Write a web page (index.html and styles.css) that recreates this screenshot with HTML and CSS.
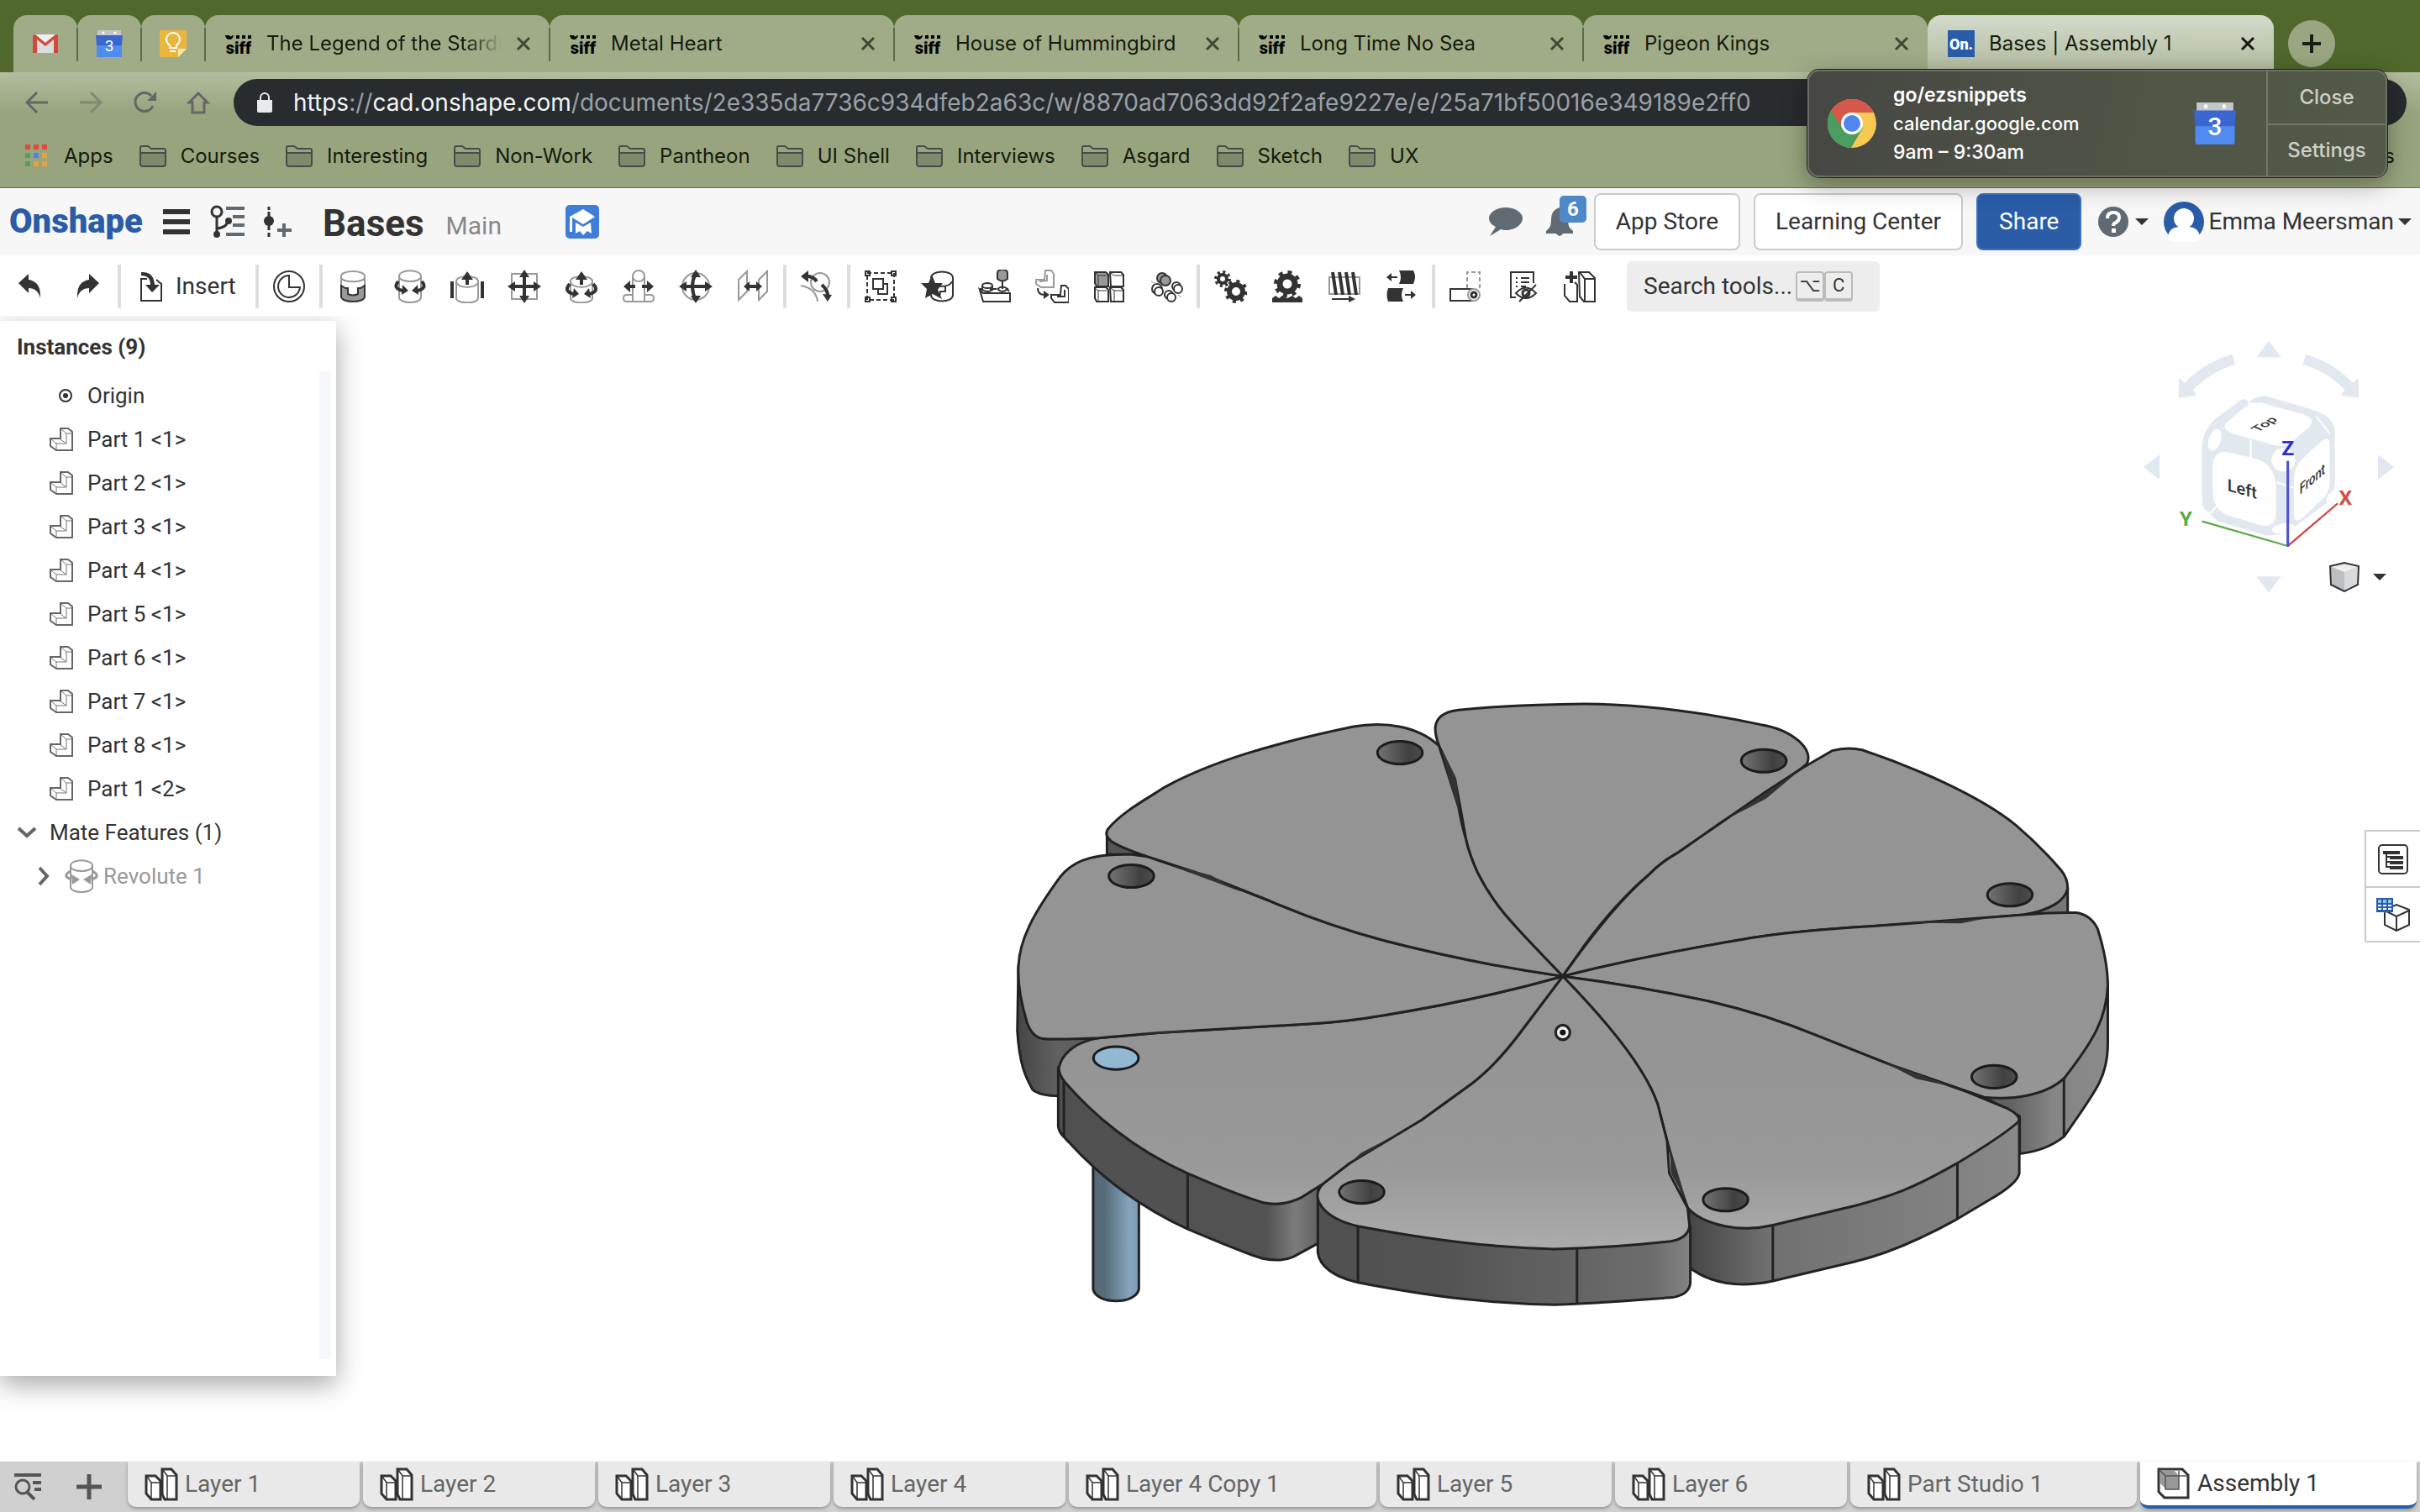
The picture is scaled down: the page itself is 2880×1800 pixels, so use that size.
FILE: index.html
```html
<!DOCTYPE html>
<html lang="en">
<head>
<meta charset="utf-8">
<title>Bases | Assembly 1</title>
<link rel="stylesheet" href="styles.css">
</head>
<body>
<svg class="defs" aria-hidden="true">
  <defs>
    <symbol id="siff" viewBox="0 0 32 32"><g fill="#000"><path d="M0 6h5q1 3 4 0h1q-1 5-5 5-4 0-5-5zM13 6h4v4h-4zM20 6h4v4h-4zM27 6h4v4h-4z"/></g><text x="16" y="28" text-anchor="middle" font-family="Roboto, sans-serif" font-weight="900" font-size="20">siff</text></symbol>
    <symbol id="close" viewBox="0 0 18 18"><path d="M2 2l14 14M16 2L2 16" fill="none" stroke="currentColor" stroke-width="3"/></symbol>
    <symbol id="folder" viewBox="0 0 32 26"><path d="M1 8h30v14q0 3-3 3H4q-3 0-3-3z" fill="#7f8a6d"/><path d="M1 8V3q0-2 2-2h7l4 3h15q2 0 2 2v16q0 3-3 3H4q-3 0-3-3zM1 9h30" fill="none" stroke="#4a4a4a" stroke-width="2"/></symbol>
    <symbol id="cal" viewBox="0 0 32 32"><path d="M2 0h28v8H2z" fill="#c4c7c9"/><circle cx="9" cy="3" r="1.500" fill="#fff"/><circle cx="23" cy="3" r="1.500" fill="#fff"/><path d="M0 6h32l-1 12v12q0 2-2 2H3q-2 0-2-2V18z" fill="#3a66d0"/><path d="M1 18h30v12q0 2-2 2H3q-2 0-2-2z" fill="#4f8bf0"/><text x="16" y="25" text-anchor="middle" font-family="Roboto, sans-serif" font-size="19" fill="#fff">3</text></symbol>
    <symbol id="caret" viewBox="0 0 16 8"><path d="M0 0h16L8 8z" fill="#333"/></symbol>
    <symbol id="part" viewBox="0 0 28 28"><path d="M13 1h9l5 4v22H8l-7-5v-9h12z" fill="#fff" stroke="#666" stroke-width="2"/><path d="M14 2l6 5h6M20 7v12H8v7M2 14l6 5M20 19l-7-5" fill="none" stroke="#777"/></symbol>
    <symbol id="studio" viewBox="0 0 40 40"><g fill="#fff" stroke="#333" stroke-width="3"><path d="M2 10h11l6 6v22H8l-6-7z"/><path d="M21 2h11l6 7v29H24l-3-6z"/></g><path d="M3 11l5 7h10M8 18v19M22 3l5 7h10M27 10v27" fill="none" stroke="#333" stroke-width="1.500"/></symbol>
    <linearGradient id="hole"><stop offset="0" stop-color="#747474"/><stop offset=".7" stop-color="#404040"/><stop offset="1" stop-color="#4c4c4c"/></linearGradient>
    <linearGradient id="pin"><stop offset="0" stop-color="#56697a"/><stop offset=".25" stop-color="#566b7a"/><stop offset=".8" stop-color="#86a5bc"/><stop offset="1" stop-color="#789cb4"/></linearGradient>
    <linearGradient id="face" gradientUnits="userSpaceOnUse" x1="0" y1="900" x2="0" y2="1380"><stop offset="0" stop-color="#949494"/><stop offset=".6" stop-color="#9a9a9a"/><stop offset="1" stop-color="#acacac"/></linearGradient>
    <linearGradient id="sideW"><stop offset="0" stop-color="#454545"/><stop offset=".5" stop-color="#616161"/><stop offset="1" stop-color="#555"/></linearGradient>
    <linearGradient id="sideSW"><stop offset="0" stop-color="#505050"/><stop offset=".8" stop-color="#525252"/><stop offset=".91" stop-color="#7b7b7b"/><stop offset="1" stop-color="#626262"/></linearGradient>
    <linearGradient id="sideS"><stop offset="0" stop-color="#505050"/><stop offset=".3" stop-color="#525252"/><stop offset=".9" stop-color="#6d6d6d"/><stop offset="1" stop-color="#838383"/></linearGradient>
    <linearGradient id="sideSE"><stop offset="0" stop-color="#454545"/><stop offset=".24" stop-color="#707070"/><stop offset="1" stop-color="#888"/></linearGradient>
    <linearGradient id="sideE"><stop offset=".2" stop-color="#606060"/><stop offset=".55" stop-color="#858585"/><stop offset="1" stop-color="#8a8a8a"/></linearGradient>
  </defs>
</svg>

<div class="browser">
  <div class="tabstrip">
    <a class="tab pinned" href="#gmail" aria-label="Gmail"><svg width="30" height="22" viewBox="0 0 30 22"><path d="M2 0h26v22H2z" fill="#eee"/><path d="M5 22V5l10 8 10-8v17z" fill="#dcdcdc"/><path d="M0 2q0-2 3-2l12 10L27 0q3 0 3 2v20h-5V6L15 14 5 6v16H0z" fill="#d04b3e"/></svg></a>
    <a class="tab pinned" href="#calendar" aria-label="Calendar"><svg width="32" height="32"><use href="#cal"/></svg></a>
    <a class="tab pinned" href="#keep" aria-label="Keep"><svg width="32" height="32" viewBox="0 0 32 32"><path d="M2 0h28q2 0 2 2v20L22 32H2q-2 0-2-2V2q0-2 2-2z" fill="#eab63e"/><path d="M32 22L22 32V22z" fill="#fbe9ae"/><path d="M12 21v-3q-4-3-4-7a8 8 0 0 1 16 0q0 4-4 7v3zM12 25h7" fill="none" stroke="#fff" stroke-width="2"/></svg></a>
    <div class="tab"><svg width="32" height="32"><use href="#siff"/></svg><a class="fade" href="#t1">The Legend of the Stardust</a><button aria-label="Close tab"><svg width="18" height="18"><use href="#close"/></svg></button></div>
    <div class="tab"><svg width="32" height="32"><use href="#siff"/></svg><a href="#t2">Metal Heart</a><button aria-label="Close tab"><svg width="18" height="18"><use href="#close"/></svg></button></div>
    <div class="tab"><svg width="32" height="32"><use href="#siff"/></svg><a href="#t3">House of Hummingbird</a><button aria-label="Close tab"><svg width="18" height="18"><use href="#close"/></svg></button></div>
    <div class="tab"><svg width="32" height="32"><use href="#siff"/></svg><a href="#t4">Long Time No Sea</a><button aria-label="Close tab"><svg width="18" height="18"><use href="#close"/></svg></button></div>
    <div class="tab"><svg width="32" height="32"><use href="#siff"/></svg><a href="#t5">Pigeon Kings</a><button aria-label="Close tab"><svg width="18" height="18"><use href="#close"/></svg></button></div>
    <div class="tab active"><svg width="32" height="32" viewBox="0 0 32 32"><path d="M0 0h32v32H0z" fill="#2a5ca8"/><text x="16" y="23" text-anchor="middle" font-family="Roboto, sans-serif" font-weight="900" font-size="18" fill="#fff">On.</text></svg><a href="#t6">Bases | Assembly 1</a><button aria-label="Close tab"><svg width="18" height="18"><use href="#close"/></svg></button></div>
    <button class="newtab" aria-label="New tab"><svg width="24" height="24" viewBox="0 0 24 24"><path d="M12 1v22M1 12h22" stroke="#1a1f10" stroke-width="4"/></svg></button>
  </div>

  <div class="navbar">
    <button aria-label="Back"><svg width="28" height="28" viewBox="0 0 28 28"><path d="M27 14H3M14 2L2 14l12 12" fill="none" stroke="#666" stroke-width="3"/></svg></button>
    <button aria-label="Forward"><svg width="28" height="28" viewBox="0 0 28 28"><path d="M1 14h24M14 2l12 12-12 12" fill="none" stroke="#7f8a70" stroke-width="3"/></svg></button>
    <button aria-label="Reload"><svg width="28" height="28" viewBox="0 0 28 28"><path d="M24 18a11 11 0 1 1-2-12" fill="none" stroke="#666" stroke-width="3"/><path d="M28 1v11H17z" fill="#666"/></svg></button>
    <button aria-label="Home"><svg width="28" height="28" viewBox="0 0 28 28"><path d="M14 3L3 14h4v12h14V14h4z" fill="none" stroke="#666" stroke-width="3"/></svg></button>
    <div class="omnibox"><svg width="18" height="24" viewBox="0 0 18 24"><path d="M0 9h18v13q0 2-2 2H2q-2 0-2-2z" fill="#e8eaed"/><path d="M4 10V6a5 5 0 0 1 10 0v4" fill="none" stroke="#e8eaed" stroke-width="2"/></svg><span><b>https</b>://<b>cad.onshape.com</b>/documents/2e335da7736c934dfeb2a63c/w/8870ad7063dd92f2afe9227e/e/25a71bf50016e349189e2ff0</span></div>
  </div>

  <nav class="bookmarks">
    <a href="#apps" class="apps"><svg width="26" height="28" viewBox="0 0 26 28"><path d="M0 0h6v6H0zM10 0h6v6h-6zM20 0h6v6h-6z" fill="#df4a3c"/><path d="M0 10h6v6H0zM0 20h6v6H0z" fill="#57a05c"/><path d="M10 10h6v6h-6z" fill="#4a86e8"/><path d="M20 10h6v6h-6zM10 20h6v6h-6zM20 20h6v6h-6z" fill="#e9a13b"/></svg>Apps</a>
    <a href="#b1"><svg width="32" height="26"><use href="#folder"/></svg>Courses</a>
    <a href="#b2"><svg width="32" height="26"><use href="#folder"/></svg>Interesting</a>
    <a href="#b3"><svg width="32" height="26"><use href="#folder"/></svg>Non-Work</a>
    <a href="#b4"><svg width="32" height="26"><use href="#folder"/></svg>Pantheon</a>
    <a href="#b5"><svg width="32" height="26"><use href="#folder"/></svg>UI Shell</a>
    <a href="#b6"><svg width="32" height="26"><use href="#folder"/></svg>Interviews</a>
    <a href="#b7"><svg width="32" height="26"><use href="#folder"/></svg>Asgard</a>
    <a href="#b8"><svg width="32" height="26"><use href="#folder"/></svg>Sketch</a>
    <a href="#b9"><svg width="32" height="26"><use href="#folder"/></svg>UX</a>
    <a href="#other" class="other">Other Bookmarks</a>
  </nav>
</div>

<aside class="toast">
  <div class="toast-main">
    <svg width="58" height="58" viewBox="0 0 58 58"><circle cx="29" cy="29" r="29" fill="#f6c953"/><path d="M29 29L4 14A29 29 0 0 0 28 58L42 34z" fill="#4a9d5f"/><path d="M4 14A29 29 0 0 1 55 16H29A13 13 0 0 0 16 32z" fill="#d5584a"/><circle cx="29" cy="29" r="13" fill="#fff"/><circle cx="29" cy="29" r="10" fill="#5186ec"/></svg>
    <p><strong>go/ezsnippets</strong><br><span>calendar.google.com</span><br>9am – 9:30am</p>
    <svg width="50" height="50"><use href="#cal"/></svg>
  </div>
  <div class="toast-actions"><button>Close</button><button>Settings</button></div>
</aside>

<header class="appbar">
  <a class="logo" href="#home">Onshape</a>
  <button aria-label="Menu"><svg width="32" height="32" viewBox="0 0 32 32"><path d="M0 4h32M0 16h32M0 28h32" stroke="#333" stroke-width="6"/></svg></button>
  <button class="versions" aria-label="Versions"><svg width="42" height="40" viewBox="0 0 42 40"><g fill="none" stroke="#333" stroke-width="3"><circle cx="9" cy="8" r="6"/><path d="M9 14v22M9 28q12-1 13-9"/></g><circle cx="9" cy="35" r="4" fill="#333"/><circle cx="23" cy="19" r="4" fill="#333"/><path d="M20 4h22M28 14h14M28 24h14M20 35h22" stroke="#5f6a72" stroke-width="4"/></svg></button>
  <button class="create" aria-label="Create version"><svg width="34" height="36" viewBox="0 0 34 36"><path d="M7 0v4M7 6v6M7 22v6M7 31v5" stroke="#333" stroke-width="3"/><circle cx="7" cy="17" r="6" fill="#333"/><path d="M25 20v16M17 28h17" stroke="#5f6a72" stroke-width="4"/></svg></button>
  <h1>Bases</h1>
  <span class="branch">Main</span>
  <svg class="edu" width="40" height="40" viewBox="0 0 40 40"><rect width="40" height="40" rx="5" fill="#3f7dd6"/><path d="M21 5l14 9-14 9-13-8v17H5V14z" fill="#fff"/><path d="M12 21l9 5 9-5 1 13-5-3-5 5-4-5-5 3z" fill="#fff"/></svg>
  <div class="account">
    <button aria-label="Comments"><svg width="40" height="34" viewBox="0 0 40 34"><path d="M20 0c11 0 20 6 20 13s-9 14-20 14q-3 0-6-1L1 34l7-11Q0 19 0 13C0 6 9 0 20 0z" fill="#5f6a72"/></svg></button>
    <button class="bell" aria-label="Notifications"><svg width="32" height="36" viewBox="0 0 32 36"><path d="M16 1q10 3 10 14 0 9 3 11l3 3v3H20q-4 6-8 0H0v-3l3-3q3-2 3-11Q6 4 16 1z" fill="#5f6a72"/></svg><span class="badge">6</span></button>
    <button class="btn">App Store</button>
    <button class="btn">Learning Center</button>
    <button class="btn primary">Share</button>
    <button class="help" aria-label="Help"><svg width="36" height="36" viewBox="0 0 36 36"><circle cx="18" cy="18" r="18" fill="#5f6a72"/><path d="M11 14q0-7 7-7t7 6q0 4-4 6-3 1-3 4" fill="none" stroke="#fff" stroke-width="4"/><path d="M16 26h5v5h-5z" fill="#fff"/></svg><svg width="16" height="8"><use href="#caret"/></svg></button>
    <button class="user"><svg width="48" height="48" viewBox="0 0 48 48"><circle cx="24" cy="24" r="24" fill="#2a5ca8"/><circle cx="24" cy="20" r="12" fill="#fff"/><path d="M5 44q0-13 13-14h12q13 1 13 14l-5 4H10z" fill="#fff"/></svg>Emma Meersman<svg width="16" height="8"><use href="#caret"/></svg></button>
  </div>
</header>

<div class="toolbar">
  <button class="tool" aria-label="Undo"><svg viewBox="0 0 40 40"><path d="M6 16L18 5v7q15 2 14 22-3-12-14-12v6z" fill="#333"/></svg></button>
  <button class="tool" aria-label="Redo"><svg viewBox="0 0 40 40"><path d="M34 16L22 5v7Q7 14 8 34q3-12 14-12v6z" fill="#333"/></svg></button>
  <i class="sep"></i>
  <button class="insert"><svg width="26" height="36" viewBox="0 0 26 36"><path d="M8 9H1v26h24V15l-6-5" fill="#fff" stroke="#333" stroke-width="2"/><path d="M1 1q15-1 16 15h6l-9 9-8-9h6Q12 5 1 5z" fill="#333"/></svg>Insert</button>
  <i class="sep"></i>
  <button class="tool"><svg viewBox="0 0 40 40"><g fill="none" stroke="#333" stroke-width="2"><circle cx="20" cy="20" r="18"/><path d="M20 7a13 13 0 1 0 13 14H20z"/></g></svg></button>
  <i class="sep"></i>
  <button class="tool"><svg viewBox="0 0 40 40"><path d="M6 20V8c0-8 28-8 28 0v12M6 9c0 7 28 7 28 0" fill="none" stroke="#999" stroke-width="2"/><path d="M6 19v13c0 8 28 8 28 0V19l-5 3h-3v7q-6 3-12 0v-7h-3z" fill="#999" stroke="#333" stroke-width="2"/></svg></button>
  <button class="tool"><svg viewBox="0 0 40 40"><path d="M7 8v25c0 8 26 8 26 0V8c0-9-26-9-26 0c0 8 26 8 26 0" fill="none" stroke="#999" stroke-width="2"/><path d="M6 14q-7 8 5 11M34 14q7 8-5 11" fill="none" stroke="#333" stroke-width="4"/><path d="M11 18l7 7-8 5zM29 18l-7 7 8 5z" fill="#333"/></svg></button>
  <button class="tool"><svg viewBox="0 0 40 40"><path d="M7 14v20c0 7 26 7 26 0V14c0-8-26-8-26 0c0 9 26 9 26 0" fill="none" stroke="#999" stroke-width="2"/><path d="M0 14h4v20H0zM36 14h4v20h-4zM20 2l7 10h-5v6h-4v-6h-5z" fill="#333"/></svg></button>
  <button class="tool"><svg viewBox="0 0 40 40"><path d="M5 5h30v30H5z" fill="none" stroke="#999" stroke-width="2"/><path d="M20 3v34M3 20h34" stroke="#333" stroke-width="4"/><path d="M20 0l6 9H14zM20 40l6-9H14zM0 20l9-6v12zM40 20l-9-6v12z" fill="#333"/></svg></button>
  <button class="tool"><svg viewBox="0 0 40 40"><path d="M7 14v20c0 7 26 7 26 0V14c0-8-26-8-26 0c0 9 26 9 26 0" fill="none" stroke="#999" stroke-width="2"/><path d="M20 2l7 10h-5v6h-4v-6h-5zM11 22l6 7-8 5zM29 22l-6 7 8 5z" fill="#333"/><path d="M6 17q-8 9 5 12M34 17q8 9-5 12" fill="none" stroke="#333" stroke-width="4"/></svg></button>
  <button class="tool"><svg viewBox="0 0 40 40"><path d="M13 38V8a7 7 0 0 1 14 0v30M13 8a7 6 0 0 0 14 0M13 30H6q-4 0-4 4t4 4h28q4 0 4-4t-4-4h-7" fill="none" stroke="#999" stroke-width="2"/><path d="M2 20l8-7v5h6v4h-6v5zM38 20l-8-7v5h-6v4h6v5z" fill="#333"/></svg></button>
  <button class="tool"><svg viewBox="0 0 40 40"><circle cx="20" cy="20" r="16" fill="none" stroke="#999" stroke-width="2"/><path d="M20 4q-8 16 0 32M3 20h34" fill="none" stroke="#333" stroke-width="4"/><path d="M20 0l6 9H14zM20 40l6-9H14zM0 20l9-6v12zM40 20l-9-6v12z" fill="#333"/></svg></button>
  <button class="tool"><svg viewBox="0 0 40 40"><path d="M3 12l10-10v24L3 36zM27 12L37 2v24L27 36z" fill="none" stroke="#999" stroke-width="2"/><path d="M9 20l7-6v4h8v-4l7 6-7 6v-4h-8v4z" fill="#333"/></svg></button>
  <i class="sep"></i>
  <button class="tool"><svg viewBox="0 0 40 40"><path d="M1 19q18 3 20 19" fill="none" stroke="#999" stroke-width="2"/><circle cx="24" cy="15" r="11" fill="none" stroke="#999" stroke-width="2"/><path d="M6 8q9-1 14 6M26 18q8 7 7 15" fill="none" stroke="#333" stroke-width="4"/><path d="M1 8l9-7v14zM33 38l-6-9 11 1z" fill="#333"/></svg></button>
  <i class="sep"></i>
  <button class="tool"><svg viewBox="0 0 40 40"><path d="M4 4h32v32H4z" fill="none" stroke="#333" stroke-width="2" stroke-dasharray="5 3"/><path d="M2 2h5v5H2zM33 2h5v5h-5zM2 33h5v5H2zM33 33h5v5h-5zM11 11h12v12H11zM17 24v5h11V17h-5" fill="none" stroke="#333" stroke-width="2"/></svg></button>
  <button class="tool"><svg viewBox="0 0 40 40"><path d="M12 10c0-10 26-10 26 0v20c0 10-26 10-26 0M23 20q12 0 14-6M22 33l1-7h6v-6" fill="none" stroke="#333" stroke-width="2"/><path d="M13 6l4 10h9l-6 8 5 11-11-6-9 5 2-11-7-7h9z" fill="#333"/></svg></button>
  <button class="tool"><svg viewBox="0 0 40 40"><path d="M2 24l4 14h32V28H6zM2 23h4M14 23h8M34 22l3 4" fill="none" stroke="#333" stroke-width="2"/><ellipse cx="11" cy="19" rx="6" ry="3" fill="none" stroke="#333" stroke-width="2"/><path d="M5 19v5q6 4 12 0v-5M23 23q6-5 12 0-6 6-12 0M29 14v9" fill="none" stroke="#333" stroke-width="2"/><path d="M23 4q0-4 6-4t6 4v7q-6 5-12 0z" fill="#999" stroke="#333" stroke-width="2"/></svg></button>
  <button class="tool"><svg viewBox="0 0 40 40"><path d="M12 1h7l3 4v16H7l-6-4v-5h10zM14 6v7l-9 1" fill="none" stroke="#999" stroke-width="2"/><path d="M31 19h5l4 4v16H23l-4-5v-4h11zM35 24v8h-9M3 22q0 8 8 8" fill="none" stroke="#333" stroke-width="2"/><path d="M17 30l-7-5v10z" fill="#333"/></svg></button>
  <button class="tool"><svg viewBox="0 0 40 40"><g fill="#fff" stroke="#333" stroke-width="2"><path d="M3 3h13l3 3v14H5l-2-4z" fill="#999"/><path d="M21 3h13l3 3v14H22zM3 21h13l3 3v14H5l-2-4zM21 21h13l3 3v14H22z"/></g><path d="M3 3l4 4h10M7 7v12M22 4l4 3h10M3 22l4 3h10M7 25v12M22 22l4 3h10M26 25v12" fill="none" stroke="#333"/></svg></button>
  <button class="tool"><svg viewBox="0 0 40 40"><g fill="#fff" stroke="#333" stroke-width="2"><g fill="#999"><circle cx="15" cy="10" r="6"/><circle cx="19" cy="13" r="6"/></g><circle cx="32" cy="20" r="5"/><circle cx="34" cy="23" r="5"/><circle cx="9" cy="23" r="6"/><circle cx="11" cy="26" r="5"/><circle cx="23" cy="30" r="5"/><circle cx="26" cy="33" r="5"/></g><path d="M2 14l6 3M34 30l4 3" stroke="#999"/></svg></button>
  <i class="sep"></i>
  <button class="tool"><svg viewBox="0 0 40 40"><g fill="none" stroke="#333"><circle cx="11" cy="11" r="5" stroke-width="4"/><circle cx="11" cy="11" r="8" stroke-width="4" stroke-dasharray="3 3.280"/><circle cx="27" cy="26" r="8" stroke-width="6"/><circle cx="27" cy="26" r="12" stroke-width="4" stroke-dasharray="4 5.420"/></g></svg></button>
  <button class="tool"><svg viewBox="0 0 40 40"><g fill="none" stroke="#333"><circle cx="20" cy="17" r="9" stroke-width="7"/><circle cx="20" cy="17" r="14" stroke-width="4" stroke-dasharray="5 6"/></g><path d="M2 39v-5l4-3 4 3 4-3 6 3 6-3 4 3 4-3 4 3v5z" fill="#333"/></svg></button>
  <button class="tool"><svg viewBox="0 0 40 40"><path d="M2 9h36v20H2z" fill="none" stroke="#999" stroke-width="2"/><path d="M6 3l4 27M14 3l4 27M22 3l4 27M30 3l4 27" stroke="#333" stroke-width="4"/><path d="M5 35h22" stroke="#333" stroke-width="2"/><path d="M33 35l-8-4v8z" fill="#333"/></svg></button>
  <button class="tool"><svg viewBox="0 0 40 40"><path d="M17 1h17q4 7 0 16H17q4-8 0-16zM4 22h18q-4 8 0 16H4q-3-8 0-16zM2 9l6-5v4h7v2H8v4zM37 30l-6-5v4h-7v2h7v4z" fill="#333"/></svg></button>
  <i class="sep"></i>
  <button class="tool"><svg viewBox="0 0 40 40"><path d="M22 22V3h15v22" fill="none" stroke="#999" stroke-width="2" stroke-dasharray="5 3"/><path d="M29 23H2v14h27" fill="none" stroke="#333" stroke-width="2"/><circle cx="30" cy="30" r="7" fill="#fff" stroke="#999" stroke-width="2"/><circle cx="30" cy="30" r="3" fill="none" stroke="#333" stroke-width="3"/></svg></button>
  <button class="tool"><svg viewBox="0 0 40 40"><path d="M12 33H6V3h27v13M12 10h2M18 10h10M12 15h2M18 15h10M12 20h2M18 20h6" fill="none" stroke="#333" stroke-width="2"/><path d="M12 28q12-13 24 0-12 12-24 0zM36 18L16 38" fill="none" stroke="#333" stroke-width="2"/><circle cx="24" cy="28" r="4" fill="none" stroke="#333" stroke-width="3"/></svg></button>
  <button class="tool"><svg viewBox="0 0 40 40"><path d="M2 17v14l6 7h9V18l-3-3M19 3h12l7 7v28H25l-5-6zM20 3l6 8h11M26 11v26" fill="none" stroke="#333" stroke-width="2"/><path d="M10 2v14M3 9h14" stroke="#333" stroke-width="4"/></svg></button>
  <button class="search">Search tools... <kbd>⌥</kbd><kbd>C</kbd></button>
</div>

<main class="workspace">
  <section class="instances">
    <h2>Instances (9)</h2>
    <div class="tree">
      <ul>
        <li><svg class="origin" viewBox="0 0 16 16"><circle cx="8" cy="8" r="7" fill="none" stroke="#333" stroke-width="2"/><circle cx="8" cy="8" r="3" fill="#333"/></svg>Origin</li>
        <li><svg class="part"><use href="#part"/></svg>Part 1 &lt;1&gt;</li>
        <li><svg class="part"><use href="#part"/></svg>Part 2 &lt;1&gt;</li>
        <li><svg class="part"><use href="#part"/></svg>Part 3 &lt;1&gt;</li>
        <li><svg class="part"><use href="#part"/></svg>Part 4 &lt;1&gt;</li>
        <li><svg class="part"><use href="#part"/></svg>Part 5 &lt;1&gt;</li>
        <li><svg class="part"><use href="#part"/></svg>Part 6 &lt;1&gt;</li>
        <li><svg class="part"><use href="#part"/></svg>Part 7 &lt;1&gt;</li>
        <li><svg class="part"><use href="#part"/></svg>Part 8 &lt;1&gt;</li>
        <li><svg class="part"><use href="#part"/></svg>Part 1 &lt;2&gt;</li>
        <li class="group"><svg width="24" height="14" viewBox="0 0 24 14"><path d="M2 2l10 9L22 2" fill="none" stroke="#666" stroke-width="4"/></svg>Mate Features (1)</li>
        <li class="mate"><svg width="14" height="24" viewBox="0 0 14 24"><path d="M2 2l9 10-9 10" fill="none" stroke="#666" stroke-width="4"/></svg><svg width="40" height="40" viewBox="0 0 40 40"><path d="M7 8v25c0 8 26 8 26 0V8c0-9-26-9-26 0c0 8 26 8 26 0" fill="none" stroke="#999" stroke-width="2"/><path d="M7 14q-11 6 1 10M33 14q11 6-1 10" fill="none" stroke="#999" stroke-width="3"/><path d="M8 18l10 6-9 6zM32 18l-10 6 9 6z" fill="#999"/></svg>Revolute 1</li>
      </ul>
      <div class="track"></div>
    </div>
  </section>

  <svg class="model" viewBox="0 0 3024 1568" preserveAspectRatio="none" role="img" aria-label="Assembly of eight petals">
    <g class="edges">
      <path d="M226 1170V1475C235 1513 339 1513 348 1475V1200z" fill="url(#pin)"/>
      <path d="M263 350V407H370z" fill="#555"/>
      <path d="M2824 490V552H2706z" fill="#777"/>
      <path d="M27 680L24 840C30 930 50 960 65 985Q85 1000 135 1000V930L240 858 100 860 50 820z" fill="url(#sideW)"/>
      <path d="M2601 1003L2696 1050V1142Q2766 1135 2814 1100C2906 980 2931 950 2931 870V730L2816 955Q2740 1010 2601 1003z" fill="url(#sideE)"/>
      <path d="M133 930V1075Q135 1090 150 1102C220 1175 330 1265 478 1327C550 1355 640 1390 680 1400Q730 1408 760 1395L826 1362V1220L680 1262 478 1190 150 965z" fill="url(#sideSW)"/>
      <path d="M1814 1275V1420C1876 1465 1956 1470 2036 1455L2256 1407C2356 1385 2456 1340 2530 1302L2616 1255Q2691 1215 2695 1190V1055L2036 1318z" fill="url(#sideSE)"/>
      <path d="M825 1240V1385C830 1420 870 1445 932 1458C1150 1497 1300 1510 1456 1513C1600 1508 1700 1500 1770 1495Q1815 1488 1818 1460V1320L1456 1376 932 1320z" fill="url(#sideS)"/>
      <path d="M148 965V1102M478 1190V1327M932 1320V1458M1516 1374V1512M2038 1318V1455M2530 1165V1302M2814 957V1100"/>
    </g>
    <g class="edges" fill="url(#face)">
      <path d="M1478 706C1420 650 1370 605 1320 550Q1280 505 1250 450Q1228 405 1220 370Q1205 290 1190 220L1148 140Q1138 115 1138 95Q1142 58 1200 52C1300 43 1400 38 1536 37Q1750 38 2006 88C2090 100 2150 150 2128 185L2090 213Q2060 240 2016 260L1906 325 1786 402Q1740 425 1706 458Q1620 525 1536 630z"/>
      <path d="M1478 706C1536 630 1620 525 1706 458Q1740 425 1786 402L1906 325 2016 255 2116 195 2196 152Q2236 142 2276 150C2406 190 2586 260 2686 335Q2750 385 2806 445Q2824 465 2824 490C2818 520 2776 545 2706 555L2556 567 2306 583Q2080 595 1956 616 1700 655 1478 706z"/>
      <path d="M1478 706Q1700 655 1956 616 2080 595 2306 583L2706 555Q2780 549 2846 550Q2886 555 2904 590C2921 640 2931 690 2931 730C2926 810 2896 860 2816 955C2766 1000 2676 1010 2601 1003L2356 925 2156 852Q2020 800 1870 768 1680 730 1478 706z"/>
      <path d="M1478 706Q1680 730 1870 768 2020 800 2156 852L2356 925 2556 990 2666 1032Q2698 1048 2694 1062Q2656 1095 2530 1165C2406 1230 2356 1245 2256 1270L2036 1318C1956 1335 1856 1320 1811 1275L1786 1210 1756 1110 1731 1020Q1715 980 1691 945 1630 850 1478 706z"/>
      <path d="M1478 706Q1630 850 1691 945 1715 980 1731 1020L1756 1110 1762 1190 1811 1275 1816 1320Q1811 1350 1766 1357C1656 1368 1556 1374 1456 1376C1300 1372 1150 1358 932 1320C840 1300 800 1250 840 1215L960 1130 1100 1060 1220 980Q1290 935 1360 850z"/>
      <path d="M1478 706L1360 850Q1290 935 1220 980L1100 1060 910 1165 840 1215 780 1250Q730 1272 680 1262C600 1240 550 1218 478 1190C330 1130 220 1040 150 965Q133 945 135 930C145 890 190 865 240 858L400 845 800 823Q900 818 1000 802 1250 765 1478 706z"/>
      <path d="M1478 706Q1250 765 1000 802 900 818 800 823L400 845 240 858C150 862 110 860 100 860Q65 860 50 820C30 760 25 710 27 680C30 620 60 560 140 460C180 415 240 405 330 407L370 412 560 472 700 522Q840 578 1000 618 1240 675 1478 706z"/>
      <path d="M1478 706Q1240 675 1000 618 840 578 700 522L530 460 370 412Q300 390 275 375Q255 360 265 345C300 305 360 275 420 240C540 180 700 135 920 93C1000 80 1090 90 1148 140L1200 290Q1210 340 1220 370 1228 405 1250 450 1280 505 1320 550C1370 605 1420 650 1478 706z"/>
    </g>
    <path d="M1155 150Q1175 230 1202 300L1194 220zM430 433L620 498 540 458zM1762 1120L1808 1260 1766 1190zM2110 200L1916 320 2020 270zM2330 915L2520 978 2420 958zM910 1165L1040 1092 940 1140zM350 850L500 840H430zM2400 575L2600 565 2540 576z" fill="#333"/>
    <g class="holes" fill="url(#hole)">
      <ellipse cx="1044" cy="157" rx="60" ry="28"/><ellipse cx="328" cy="460" rx="60" ry="28"/><ellipse cx="942" cy="1236" rx="60" ry="28"/><ellipse cx="2014" cy="177" rx="60" ry="28"/><ellipse cx="2670" cy="506" rx="60" ry="28"/><ellipse cx="2628" cy="953" rx="60" ry="28"/><ellipse cx="1912" cy="1255" rx="60" ry="28"/><ellipse cx="287" cy="907" rx="60" ry="28" fill="#92b8d2"/>
    </g>
    <ellipse cx="1478" cy="844" rx="19" ry="18" fill="#eee" stroke="#222" stroke-width="7"/><ellipse cx="1478" cy="844" rx="8" ry="7" fill="#111"/>
  </svg>

  <svg class="cube" viewBox="0 0 1140 1050" role="img" aria-label="View cube">
    <g fill="#e2e8ef">
      <path d="M600 78l44 58H556zM600 977l44-58H556zM152 528l58-44v88zM1048 528l-58-44v88z"/>
      <path d="M470 125l10 36q-90 28-150 92l14 20-66 8 2-70 20 16q70-74 170-102zM732 125l-10 36q90 28 150 92l-16 20 66 8-2-70-20 16q-70-74-170-102z"/>
      <path d="M362 450q4-50 40-88l96-72q20-12 32 8l-10 14q20-38 70-38l180 54q60 20 66 70v190q0 30-26 38l-4 32-130 96q-30 22-90 18l-160-48q-30-12-38-36-26-4-26-40z"/>
    </g>
    <g fill="#fff">
      <path d="M446 372l66-56q26-22 60-18l150 42q50 16 22 46l-64 54q-26 16-60 10l-130-36q-60-16-44-42zM400 520q4-46 46-46l100 22q76 20 80 100v100q-4 44-46 42l-120-36q-60-20-60-90zM690 570q4-50 30-72l66-60q30-26 32 10v130q0 44-30 68l-70 66q-28 20-28-20z"/>
      <ellipse cx="407" cy="431" rx="22" ry="40" transform="rotate(20 407 431)"/><ellipse cx="652" cy="502" rx="42" ry="42"/><ellipse cx="652" cy="748" rx="40" ry="18" transform="rotate(-8 652 748)"/>
    </g>
    <path d="M536 430v70M770 348l48 60M628 582l60 20M392 692l22-24M524 300l24 2M806 648l24-26" stroke="#fff" stroke-width="6"/>
    <g font-family="Roboto, sans-serif" fill="#333" font-weight="500">
      <text transform="matrix(1 .28 0 1 452 612)" font-size="60">Left</text>
      <text transform="matrix(.72 -.62 0 1 710 628)" font-size="54">Front</text>
      <text transform="matrix(.8 -.5 .75 .35 562 404)" font-size="54">Top</text>
    </g>
    <g fill="none" stroke-width="7"><path d="M668 810L362 722" stroke="#5daa4a"/><path d="M668 810L846 658" stroke="#d0504a"/><path d="M668 812V506" stroke="#4a4fd8" stroke-width="9"/></g>
    <g font-family="Roboto, sans-serif" font-size="74" font-weight="700" text-anchor="middle"><text x="304" y="738" fill="#5daa4a">Y</text><text x="874" y="663" fill="#d0504a">X</text><text x="668" y="485" fill="#2c30d4">Z</text></g>
  </svg>
  <button class="viewmode" aria-label="View options"><svg width="36" height="36" viewBox="0 0 36 36"><path d="M1 5l17-4 17 4v22L18 35 1 27z" fill="#d9dadb"/><path d="M1 5l17 7v23L1 27z" fill="#bdbec0"/><path d="M1 5l17-4 17 4-17 7z" fill="#eee"/><path d="M1 5l17-4 17 4-1 22-16 8-16-8z" fill="none" stroke="#333" stroke-width="2"/></svg><svg width="16" height="8"><use href="#caret"/></svg></button>
  <div class="dock">
    <button aria-label="Configuration"><svg width="36" height="36" viewBox="0 0 36 36"><rect x="1" y="1" width="34" height="34" rx="4" fill="none" stroke="#333" stroke-width="2"/><path d="M6 10h20M14 16h16M14 22h16M14 28h16" stroke="#333" stroke-width="4"/><path d="M10 10v17h5M10 15h5M10 21h5" fill="none" stroke="#333" stroke-width="2"/></svg></button>
    <button aria-label="Table"><svg width="40" height="40" viewBox="0 0 40 40"><path d="M10 14l14-6 15 6v18l-15 7-14-7zM10 15l14 7 15-7M24 22v17" fill="none" stroke="#333" stroke-width="2"/><path d="M0 0h20v17H0z" fill="#2a5ca8"/><path d="M2 2h4v4H2zM8 2h4v4H8zM14 2h4v4h-4z" fill="#8cc6ee"/><path d="M2 8h4v2H2zM8 8h4v2H8zM14 8h4v2h-4zM2 12h4v2H2zM8 12h4v2H8zM14 12h4v2h-4z" fill="#fff"/></svg></button>
  </div>
</main>

<footer class="sheets">
  <button class="mini" aria-label="Tab manager"><svg width="34" height="32" viewBox="0 0 34 32"><path d="M0 2h32M22 11h10M24 19h8" stroke="#555" stroke-width="4"/><circle cx="10" cy="16" r="8" fill="none" stroke="#555" stroke-width="3"/><path d="M15 22l9 9" stroke="#555" stroke-width="4"/></svg></button>
  <button class="mini" aria-label="Add tab"><svg width="30" height="30" viewBox="0 0 30 30"><path d="M15 0v30M0 15h30" stroke="#555" stroke-width="5"/></svg></button>
  <a href="#s1"><svg><use href="#studio"/></svg>Layer 1</a>
  <a href="#s2"><svg><use href="#studio"/></svg>Layer 2</a>
  <a href="#s3"><svg><use href="#studio"/></svg>Layer 3</a>
  <a href="#s4"><svg><use href="#studio"/></svg>Layer 4</a>
  <a href="#s5" class="wide"><svg><use href="#studio"/></svg>Layer 4 Copy 1</a>
  <a href="#s6"><svg><use href="#studio"/></svg>Layer 5</a>
  <a href="#s7"><svg><use href="#studio"/></svg>Layer 6</a>
  <a href="#s8" class="long"><svg><use href="#studio"/></svg>Part Studio 1</a>
  <a href="#s9" class="current"><svg viewBox="0 0 40 40"><path d="M2 3h28l7 7v27H9l-7-7z" fill="#fff" stroke="#333" stroke-width="3"/><path d="M4 4h16l6 7v16H11l-7-7z" fill="#999"/><path d="M3 4l7 7h26M10 11v16h16V5" fill="none" stroke="#555" stroke-width="1.500"/></svg>Assembly 1</a>
</footer>
</body>
</html>
```
FILE: styles.css
```css
* { box-sizing: border-box; }
body { margin: 0; min-height: 100vh; display: flex; flex-direction: column; background: #fff; color: #333; font: 28px/32px Roboto, sans-serif; }
button { margin: 0; padding: 0; border: 0; background: none; color: inherit; font: inherit; }
a { color: inherit; text-decoration: none; }
svg { display: block; flex: none; }
.defs { position: absolute; width: 0; height: 0; }

/* Browser chrome */
.browser { color: #151a0c; background: #97a47d; border-bottom: 1px solid #66735a; font: 24px/32px Inter, sans-serif; }
.tabstrip { display: flex; height: 86px; padding: 18px 0 0 16px; background: #50682c; }
.tab { flex: 0 1 410px; min-width: 0; display: flex; align-items: center; height: 68px; padding: 0 22px 0 24px; gap: 17px; border-radius: 16px 16px 0 0; background: #a0ac88; position: relative; }
.tab::before { content: ""; position: absolute; left: -1px; top: 15px; width: 2px; height: 40px; background: #5d6a48; }
.tab.pinned:first-child::before, .tab.active::before { display: none; }
.tab a { flex: 1; min-width: 0; white-space: nowrap; overflow: hidden; }
.tab .fade { -webkit-mask-image: linear-gradient(90deg, #000 85%, transparent); mask-image: linear-gradient(90deg, #000 85%, transparent); }
.tab button { color: #404832; }
.tab.pinned { flex: 0 0 76px; padding: 0; justify-content: center; }
.tab.active { flex-basis: 412px; background: linear-gradient(#d3dacb, #b3bca0); }
.tab.active button { color: #151a0c; }
.newtab { width: 56px; height: 56px; margin: 6px 0 0 17px; border-radius: 50%; background: #9aa681; display: grid; place-items: center; }
.navbar { display: flex; align-items: center; height: 72px; padding: 0 16px 0 30px; gap: 36px; background: linear-gradient(#b3bd9f, #97a47d 48px); }
.omnibox { flex: 1; display: flex; align-items: center; height: 56px; gap: 25px; margin-left: -8px; padding-left: 28px; border-radius: 28px; background: #282c2f; color: #9aa0a6; font-size: 28px; white-space: nowrap; }
.omnibox b { font-weight: 400; color: #f1f3f4; }
.bookmarks { display: flex; align-items: center; height: 65px; padding: 0 30px 10px; gap: 31px; }
.bookmarks a { display: flex; align-items: center; gap: 17px; }
.bookmarks .apps { gap: 20px; }
.bookmarks .other { margin-left: auto; }

/* Desktop notification */
.toast { position: absolute; right: 39px; top: 83px; z-index: 2; display: flex; width: 690px; height: 128px; border: 2px solid #6b6e62; border-radius: 14px; background: linear-gradient(100deg, #464744, #505545 60%, #535a48); box-shadow: 0 0 0 1px #222, 0 8px 30px rgba(0,0,0,.35); color: #fff; font: 500 23px/34px Inter, sans-serif; }
.toast-main { flex: 1; display: flex; align-items: center; gap: 20px; padding: 0 36px 0 22px; }
.toast p { flex: 1; margin: 0; }
.toast strong { font-weight: 600; }
.toast span { font-size: 22px; }
.toast-actions { flex: 0 0 142px; display: grid; grid-template-rows: 1fr 1fr; border-left: 2px solid #73776a; color: #cdd0c6; font-size: 24px; }
.toast-actions button + button { border-top: 2px solid #73776a; }

/* Document header */
.appbar { display: flex; align-items: center; height: 80px; padding: 0 10px 0 11px; background: #f7f7f7; }
.logo { width: 160px; margin-right: 23px; color: #2a5ca8; font-size: 40px; font-weight: 900; }
.versions { margin-left: 23px; }
.create { margin-left: 22px; }
h1 { margin: 4px 26px 0 37px; font-size: 44px; line-height: 52px; font-weight: 700; }
.branch { color: #888; font-size: 30px; padding-top: 10px; }
.edu { margin-left: 76px; }
.account { display: flex; align-items: center; margin-left: auto; gap: 16px; }
.bell { position: relative; margin: 0 9px 0 12px; }
.badge { position: absolute; left: 16px; top: -13px; width: 32px; height: 32px; border-radius: 5px; background: #4f88c8; color: #fff; font-size: 24px; font-weight: 700; }
.btn { height: 68px; padding: 0 24px; border: 2px solid #ccc; border-radius: 8px; background: #fff; }
.primary { padding: 0 25px; border-color: #3a75bd; background: #2a5ca8; color: #fff; }
.help { display: flex; align-items: center; gap: 8px; margin: 0 2px 0 4px; }
.user { display: flex; align-items: center; gap: 5px; }

/* Tools */
.toolbar { display: flex; align-items: center; height: 74px; padding-left: 2px; }
.tool { width: 68px; height: 60px; display: grid; place-items: center; }
.tool svg { width: 40px; height: 40px; }
.sep { width: 4px; height: 52px; margin: 0 2px; background: #ddd; }
.insert { width: 156px; display: flex; align-items: center; gap: 16px; padding-left: 21px; }
.search { display: flex; align-items: center; height: 60px; margin-left: 22px; padding: 0 32px 0 20px; border-radius: 6px; background: #ededed; }
kbd { width: 34px; height: 36px; border: 2px solid #bbb; border-bottom-width: 4px; border-radius: 4px; font: 22px/30px Roboto, "DejaVu Sans", sans-serif; }
.search kbd:first-of-type { margin-left: 4px; }

/* Workspace */
.workspace { flex: 1; position: relative; padding: 4px 0 102px; display: flex; }
.instances { width: 400px; display: flex; flex-direction: column; padding: 15px 6px 20px 0; background: #fff; box-shadow: 0 10px 30px rgba(0,0,0,.35); clip-path: inset(-6px -40px -50px 0); font-size: 26px; }
h2 { margin: 0 0 13px 20px; font-size: 26px; line-height: 32px; font-weight: 700; }
.tree { flex: 1; display: flex; justify-content: space-between; }
.track { width: 14px; background: #f6f8fb; }
ul { margin: 3px 0 0; padding: 0; list-style: none; }
li { display: flex; align-items: center; height: 52px; padding-left: 59px; gap: 17px; }
.part { width: 28px; height: 28px; }
.origin { width: 16px; height: 16px; margin: 0 1px 0 11px; }
.group { padding-left: 20px; gap: 15px; }
.mate { padding-left: 45px; gap: 6px; color: #999; }
.mate svg:first-child { margin-right: 12px; }
.model { position: absolute; left: 1200px; top: 442px; width: 1350px; height: 760px; }
.edges path { stroke: #222; stroke-width: 3px; vector-effect: non-scaling-stroke; stroke-linejoin: round; }
.holes ellipse { stroke: #1c1c1c; stroke-width: 3px; vector-effect: non-scaling-stroke; }
.cube { position: absolute; right: 0; top: 2px; width: 380px; height: 350px; }
.viewmode { position: absolute; right: 40px; top: 291px; display: flex; align-items: center; gap: 16px; }
.dock { position: absolute; right: 0; top: 610px; width: 66px; border: 2px solid #ccc; border-right: 0; }
.dock button { width: 64px; height: 65px; display: grid; place-items: center; }
.dock button + button { border-top: 2px solid #ccc; }

/* Sheet tabs */
.sheets { display: flex; height: 60px; gap: 4px; padding-right: 4px; background: #d0d0d0; }
.sheets .mini { width: 68px; display: grid; place-items: center; }
.sheets .mini + a { margin-left: 8px; }
.sheets a { flex: 0 1 276px; display: flex; align-items: center; gap: 8px; height: 54px; padding: 0 0 0 20px; border-radius: 0 0 10px 10px; background: #e9e9e9; color: #666; box-shadow: 0 2px 4px rgba(0,0,0,.3); white-space: nowrap; }
.sheets a svg { width: 40px; height: 40px; }
.sheets .wide { flex-basis: 366px; }
.sheets .long { flex-basis: 341px; }
.sheets .current { flex: 1 0 300px; height: 56px; background: #fff; color: #333; border-bottom: 4px solid #2a5ca8; }
```
